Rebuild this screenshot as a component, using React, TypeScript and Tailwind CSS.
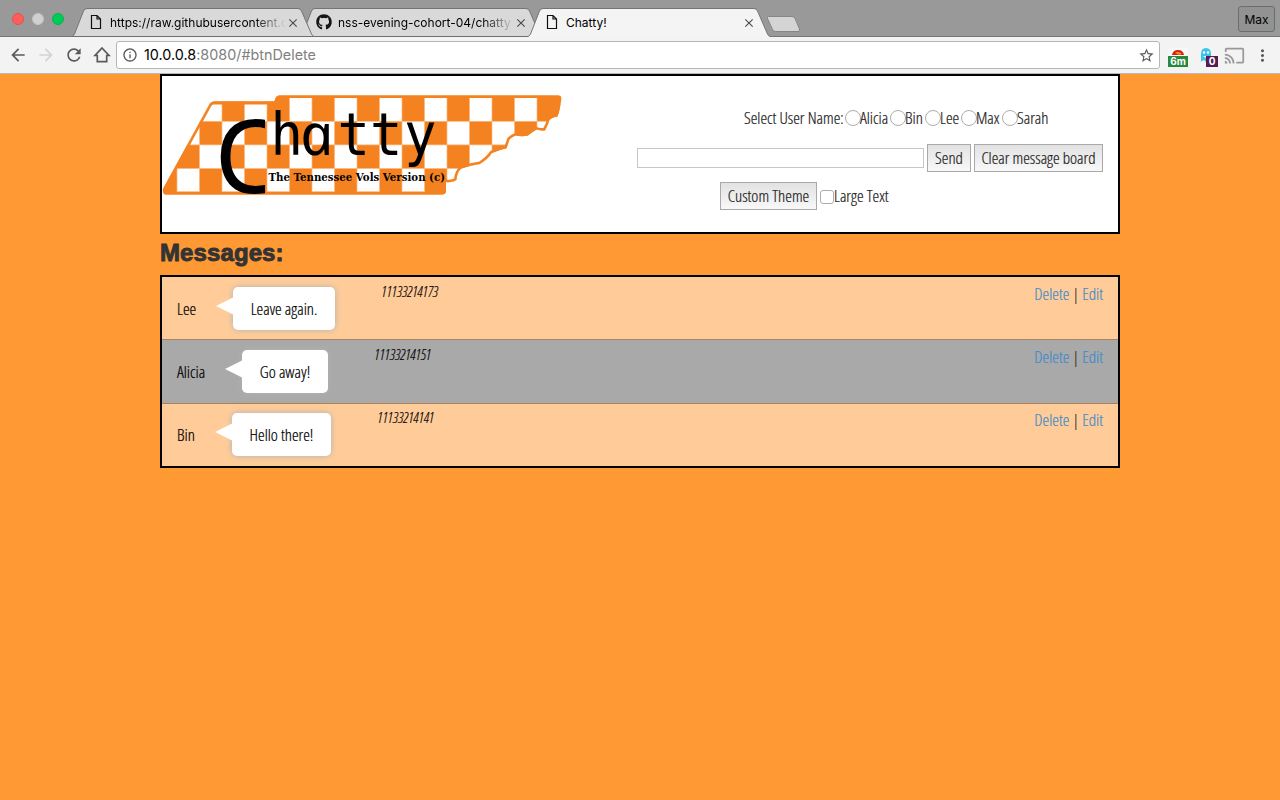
import React from "react";
import { FaGithub } from "react-icons/fa";
import { MdArrowBack, MdArrowForward, MdRefresh, MdInfoOutline, MdStarBorder, MdCast, MdMoreVert, MdClose } from "react-icons/md";

const PageIcon = () => (
  <svg width="12" height="16" viewBox="0 0 12 16" className="shrink-0">
    <path d="M1.5 1.5H7L10.5 5V14.5H1.5Z M7 1.5V5H10.5" fill="none" stroke="#111" strokeWidth="1.2" />
  </svg>
);

const HomeIcon = () => (
  <svg width="18" height="18" viewBox="0 0 18 18" className="ml-px shrink-0">
    <path d="M9 2L16 9.500H13.700V15.700H4.300V9.500H2Z" fill="none" stroke="#5a5a5a" strokeWidth="1.700" />
  </svg>
);

function TabShape({ fill, active }: { fill: string; active?: boolean }) {
  return (
    <svg width="242" height="29" viewBox="0 0 242 29" className="absolute left-0 top-0">
      <path d="M0 28.5Q1.5 28 2.5 26L11.5 3Q12.5 .5 15 .5H226Q228.500 .5 229.500 3L239.500 26Q240.500 28 242 28.500V29H0Z" fill={fill} />
      <path d="M0 28.500Q1.500 28 2.500 26L11.500 3Q12.500 .5 15 .5H226Q228.500 .5 229.500 3L239.500 26Q240.500 28 242 28.500" fill="none" stroke="#757575" />
      {!active && <path d="M0 28.500H242" stroke="#6f6f6f" />}
    </svg>
  );
}

interface TabProps {
  title: string;
  icon: React.ReactNode;
  active?: boolean;
  fade?: boolean;
  className: string;
}

function Tab({ title, icon, active, fade, className }: TabProps) {
  return (
    <div className={`relative h-[29px] w-[242px] shrink-0 ${className}`}>
      <TabShape fill={active ? "#f4f4f4" : "#d9d9d9"} active={active} />
      <div className="relative flex h-[28px] items-center pl-[16px]">
        <div className="flex w-[22px] items-center">{icon}</div>
        <div className={`w-[176px] overflow-hidden whitespace-nowrap pt-px text-[12px] leading-[16px] text-black ${fade ? "[mask-image:linear-gradient(to_right,black_82%,transparent)]" : ""}`}>
          {title}
        </div>
        <MdClose className="mt-px size-[14px] text-[#4c4c4c]" />
      </div>
    </div>
  );
}

function Browser() {
  return (
    <header className="font-['Inter',sans-serif]">
      <div className="flex h-[37px] bg-[#999] shadow-[inset_0_-1px_0_#777]">
        <div className="flex w-[72px] shrink-0 items-center gap-[8px] pl-[12px]">
          <i className="size-[12px] rounded-full border border-[#e8504c] bg-[#ff5f5a]" />
          <i className="size-[12px] rounded-full border border-[#c4c4c4] bg-[#d0d0d0]" />
          <i className="size-[12px] rounded-full border border-[#00b84c] bg-[#00ca56]" />
        </div>
        <div className="isolate flex pt-[8px]">
          <Tab className="z-20" title="https://raw.githubusercontent.c" fade icon={<span className="pl-[2px]"><PageIcon /></span>} />
          <Tab className="z-10 -ml-[14px]" title="nss-evening-cohort-04/chatty" fade icon={<FaGithub className="size-[16px] text-[#161616]" />} />
          <Tab className="z-30 -ml-[14px]" title="Chatty!" active icon={<span className="pl-[2px]"><PageIcon /></span>} />
        </div>
        <svg width="36" height="20" viewBox="0 0 36 20" className="-ml-[4px] mt-[14px] shrink-0">
          <path d="M2.500 2.500H26Q28 2.500 29 4.500L33.500 15Q34 17.500 32 17.500H9.500Q7.500 17.500 6.500 15.500L1.500 4.500Q1 2.500 2.500 2.500Z" fill="#d4d4d4" stroke="#858585" />
        </svg>
        <div className="ml-auto mr-[5px] mt-[6px] flex h-[26px] w-[37px] items-center justify-center rounded-[3px] border border-[#6d6d6d] bg-[#929292] pt-px text-[12px] text-black">
          Max
        </div>
      </div>
      <div className="flex h-[37px] items-center border-b border-[#b9b9b9] bg-[#f3f3f3] pl-[8px]">
        <div className="flex w-[108px] items-center gap-[8px] text-[#5a5a5a]">
          <MdArrowBack className="size-[20px]" />
          <MdArrowForward className="size-[20px] text-[#d3d3d3]" />
          <MdRefresh className="size-[20px]" />
          <HomeIcon />
        </div>
        <div className="flex h-[28px] w-[1044px] items-center rounded-[3px] border border-[#b6b6b6] bg-white pl-[5px] pr-[4px]">
          <MdInfoOutline className="size-[16px] text-[#5a5a5a]" />
          <span className="ml-[6px] text-[14.350px] tracking-[0.010px] text-black">10.0.0.8<span className="text-[#808080]">:8080/#btnDelete</span></span>
          <MdStarBorder className="ml-auto size-[17px] text-[#5a5a5a]" />
        </div>
        <div className="relative ml-[8px] mt-[5px] h-[20px] w-[20px]">
          <svg width="20" height="10" viewBox="0 0 20 10" className="block"><path d="M0 0H20V10H0Z" fill="#f7f7f7" /><path d="M4 7Q5 2 10 2T16 7Z" fill="#d41c12" /><path d="M7 5Q10 2 14 6L11 7Z" fill="#f08a18" /></svg>
          <b className="absolute left-0 top-[8px] flex h-[11px] w-[20px] items-center justify-center bg-[#27893c] text-[10px] leading-[10px] text-white">6m</b>
        </div>
        <div className="relative ml-[11px] mt-[5px] h-[20px] w-[20px]">
          <svg width="14" height="16" viewBox="0 0 14 16" className="block"><path d="M2 13V6Q2 0 7 0T12 6V14L9 12L7 14L5 12L1 14Z" fill="#3fc2ea" /><circle cx="5" cy="4.500" r="1.200" fill="#fff" /><circle cx="9" cy="4.500" r="1.200" fill="#fff" /><path d="M4 8Q7 11 10 8Z" fill="#fff" /></svg>
          <b className="absolute left-[7px] top-[8px] flex h-[11px] w-[12px] items-center justify-center bg-[#571a51] text-[10px] leading-[10px] text-white">0</b>
        </div>
        <MdCast className="ml-[5px] size-[21px] text-[#999]" />
        <MdMoreVert className="ml-[8px] size-[19px] text-[#5a5a5a]" />
      </div>
    </header>
  );
}

const OUTLINE =
  "M165 194.500H442Q446.500 194.500 446 190V182Q452 183 456.500 180Q457 172 461.500 168.500Q471 165 480 164Q488 159 492 153Q499 150 506.500 148.300Q508 144 509.500 139.500Q512 137 515.500 135.500Q522 137 528 135.500Q532 132 536.500 129.500Q541 131 545 130.500Q548 125 549.500 120Q552 117 557.500 116.500Q560 110 561.300 99Q561.500 95.500 558 95.500H279Q275.500 95.500 274.500 101.500H214Q211 101.500 209 105L163.500 188Q161.500 192 165 194.500Z";

const CHECKS = [0, 1, 2, 3].flatMap((r) =>
  Array.from({ length: 9 }, (_, i) => ({ x: 177 + 22.5 * (2 * i + (r % 2 ? 0 : 1)), y: 97.7 + 23.6 * r })),
);

function Logo() {
  return (
    <svg width="402" height="120" viewBox="162 85 402 120" className="block shrink-0">
      <defs>
        <clipPath id="state"><path d={OUTLINE} /></clipPath>
        <clipPath id="capital"><rect x="215" y="100" width="50" height="100" /></clipPath>
      </defs>
      <g clipPath="url(#state)">
        <rect x="160" y="90" width="410" height="110" fill="#f58220" />
        {CHECKS.map((c) => (
          <rect key={`${c.x}-${c.y}`} x={c.x} y={c.y} width="22.500" height={c.y > 160 ? 23.2 : 23.6} fill="#fff" stroke="#fbb87c" strokeWidth=".7" />
        ))}
        <path d="M200 102H275" stroke="#f58220" strokeWidth="5" />
        <path d={OUTLINE} fill="none" stroke="#f58220" strokeWidth="5" />
      </g>
      <g clipPath="url(#capital)">
        <text x="214.500" y="193" fontSize="102" className="font-['Noto_Sans',sans-serif] font-normal [font-stretch:100%]">C</text>
      </g>
      <g transform="translate(0 155) scale(1 1.1)" fontSize="54" className="font-['DejaVu_Sans_Mono',monospace] font-normal [font-stretch:100%]">
        <text x="270.500" y="0">h</text>
        <text x="337.500" y="0">t</text>
        <text x="370" y="0">t</text>
        <text x="404" y="0">y</text>
      </g>
      <text x="303.500" y="0" transform="translate(0 155) skewX(12)" fontSize="58" className="font-['Noto_Sans',sans-serif] font-normal italic [font-stretch:100%]">a</text>
      <text x="268.500" y="181" fontSize="11" textLength="176.500" lengthAdjust="spacingAndGlyphs" className="font-['DejaVu_Serif',serif] font-bold [font-stretch:100%]">The Tennessee Vols Version (c)</text>
    </svg>
  );
}

const USERS = [
  { name: "Alicia", width: "w-[45px]" },
  { name: "Bin", width: "w-[35px]" },
  { name: "Lee", width: "w-[36px]" },
  { name: "Max", width: "w-[41px]" },
  { name: "Sarah", width: "w-[48px]" },
];

const BUTTON = "h-[28px] shrink-0 border border-[#a9a9a9] bg-linear-to-b from-[#e2e2e2] to-[#f8f8f8] text-center";

function Controls() {
  return (
    <div className="flex flex-col items-start text-[#222]">
      <div className="mt-[29px] flex h-[26px] items-center pl-[180px]">
        <span className="w-[101px]">Select User Name:</span>
        {USERS.map((u) => (
          <label key={u.name} className={`flex items-center ${u.width}`}>
            <span className="size-[16px] shrink-0 rounded-full border border-[#adadad] bg-white" />
            <span className="-ml-px">{u.name}</span>
          </label>
        ))}
      </div>
      <div className="mt-[13px] flex items-center pl-[73px]">
        <input className="h-[20px] w-[287px] border border-[#c6c6c6] bg-white" />
        <button className={`ml-[3px] w-[44px] ${BUTTON}`}>Send</button>
        <button className={`ml-[3px] w-[129px] ${BUTTON}`}>Clear message board</button>
      </div>
      <div className="mt-[10px] flex items-center pl-[156px]">
        <button className={`w-[97px] ${BUTTON}`}>Custom Theme</button>
        <span className="ml-[3px] mt-[2px] size-[14px] rounded-[3px] border border-[#adadad] bg-white" />
        <span>Large Text</span>
      </div>
    </div>
  );
}

const MESSAGES = [
  { name: "Lee", text: "Leave again.", time: "11133214173", row: "h-[63px] bg-[#ffcc99] border-b", nameW: "w-[56px]", bubbleW: "w-[102px]", offset: "" },
  { name: "Alicia", text: "Go away!", time: "11133214151", row: "h-[64px] bg-[#a9a9a9] border-b", nameW: "w-[65px]", bubbleW: "w-[86px]", offset: "" },
  { name: "Bin", text: "Hello there!", time: "11133214141", row: "h-[62px] bg-[#ffcc99]", nameW: "w-[55px]", bubbleW: "w-[99px]", offset: "-mt-px" },
];

export default function App() {
  return (
    <div className="h-[800px] w-[1280px] overflow-hidden bg-[#ff9933]">
      <Browser />
      <main className="mx-auto w-[960px] font-['Open_Sans',sans-serif] text-[16.800px] leading-[24px] font-[350] whitespace-nowrap [font-stretch:75%] [-webkit-text-stroke:0.200px_currentColor]">
        <section className="flex h-[160px] border-2 border-black bg-white">
          <div className="mt-[9px] [-webkit-text-stroke:0]"><Logo /></div>
          <Controls />
        </section>
        <h2 className="h-[41px] pt-[5px] font-['Liberation_Sans',sans-serif] text-[24px] leading-[28px] font-bold tracking-[0.100px] text-[#333] [font-stretch:100%] [-webkit-text-stroke:0.900px_#333]">Messages:</h2>
        <section className="border-2 border-black">
          {MESSAGES.map((m) => (
            <div key={m.time} className={`flex flex-col border-[#a9835c] ${m.row}`}>
              <div className={`flex px-[15px] text-black ${m.offset}`}>
                <span className={`mt-[20px] ${m.nameW}`}>{m.name}</span>
                <div className={`relative mt-[10px] h-[43px] rounded-[5px] bg-white text-center leading-[43px] shadow-[0_0_6px_#b2b2b2] ${m.bubbleW}`}>
                  <svg width="18" height="20" viewBox="0 0 18 20" className="absolute -left-[17px] top-[10px]">
                    <path d="M0 9L18 0V18Z" fill="#fff" />
                  </svg>
                  {m.text}
                </div>
                <span className="ml-[46.500px] mt-[3px] text-[14.300px]"><em>{m.time}</em></span>
                <span className="ml-auto mt-[5px] text-[#333]">
                  <a className="text-[#428bca]">Delete</a> <span>|</span> <a className="text-[#428bca]">Edit</a>
                </span>
              </div>
            </div>
          ))}
        </section>
      </main>
    </div>
  );
}
